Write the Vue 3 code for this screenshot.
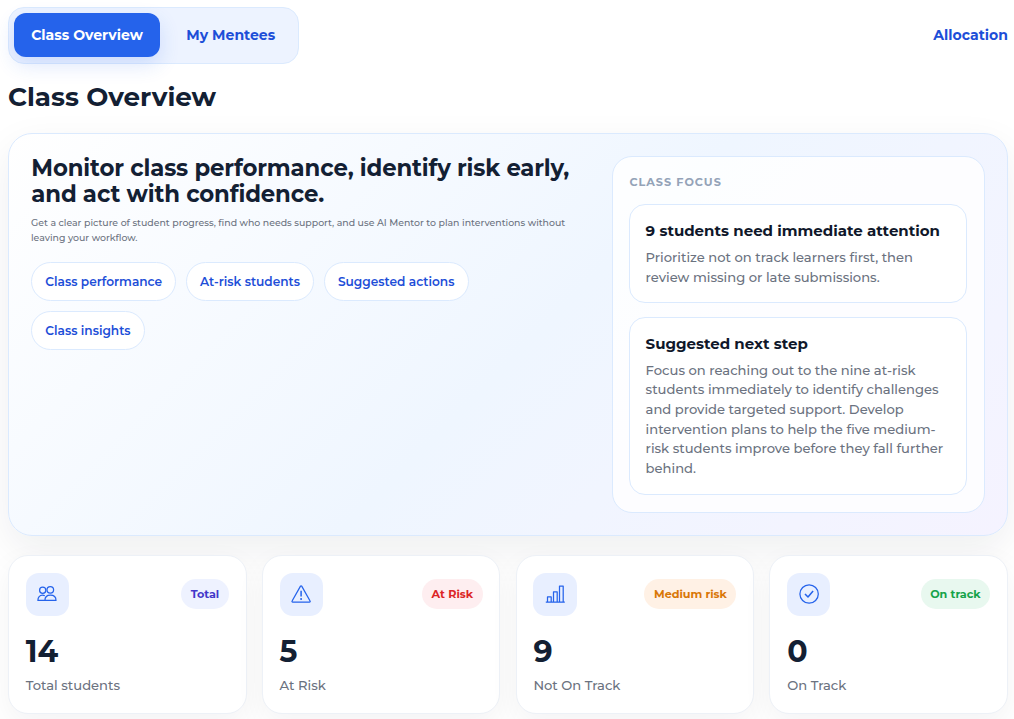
<script setup>
const chips = ['Class performance', 'At-risk students', 'Suggested actions', 'Class insights']

const stats = [
  { icon: 'people', badge: 'Total', tone: 'total', value: 14, label: 'Total students' },
  { icon: 'warning', badge: 'At Risk', tone: 'risk', value: 5, label: 'At Risk' },
  { icon: 'chart', badge: 'Medium risk', tone: 'medium', value: 9, label: 'Not On Track' },
  { icon: 'check', badge: 'On track', tone: 'ok', value: 0, label: 'On Track' },
]
</script>

<template>
  <main class="page">
    <header class="topbar">
      <nav class="tabs">
        <button class="tab active">Class Overview</button>
        <button class="tab">My Mentees</button>
      </nav>
      <a class="allocation">Allocation</a>
    </header>

    <h1 class="page-title">Class Overview</h1>

    <section class="hero">
      <div class="hero-copy">
        <h2>Monitor class performance, identify risk early,<br />and act with confidence.</h2>
        <p>
          Get a clear picture of student progress, find who needs support, and use AI Mentor to plan interventions without<br />
          leaving your workflow.
        </p>
        <div class="chips">
          <span v-for="chip in chips" :key="chip" class="chip">{{ chip }}</span>
        </div>
      </div>

      <aside class="focus">
        <div class="focus-label">CLASS FOCUS</div>
        <article class="focus-card attention">
          <h3>9 students need immediate attention</h3>
          <p>Prioritize not on track learners first, then review missing or late submissions.</p>
        </article>
        <article class="focus-card next-step">
          <h3>Suggested next step</h3>
          <p>
            Focus on reaching out to the nine at-risk students immediately to identify challenges
            and provide targeted support. Develop intervention plans to help the five medium-risk
            students improve before they fall further behind.
          </p>
        </article>
      </aside>
    </section>

    <section class="stats">
      <article v-for="stat in stats" :key="stat.label" class="stat-card">
        <div class="stat-top">
          <span class="stat-icon">
            <svg v-if="stat.icon === 'people'" viewBox="0 0 20 20">
              <circle cx="5.7" cy="5.2" r="3.1" />
              <circle cx="13.3" cy="4.8" r="3.3" />
              <path d="M7.9 15.4H.9c0-3.2 1.8-5.2 4.6-5.2.9 0 1.6.2 2.3.6M7.9 15.4c0-3.3 2.1-5.2 5.5-5.2s5.6 1.9 5.6 5.2z" />
            </svg>
            <svg v-else-if="stat.icon === 'warning'" viewBox="0 0 20 20">
              <path d="M9.5 1.1a.7.7 0 0 1 1.2 0l8.4 14.9c.3.5 0 1-.6 1H1.7c-.6 0-.9-.5-.6-1z" />
              <path class="mark" d="M10.1 5.8v5.8M10.1 13.1v1.8" />
            </svg>
            <svg v-else-if="stat.icon === 'chart'" viewBox="0 0 20 20">
              <path d="M.8 17.1h19M2.5 17.1v-5.2h3.7v5.2M8.5 17.1V6.8h3.7v10.3M14.5 17.1V1.1h3.7v16" />
            </svg>
            <svg v-else viewBox="0 0 20 20">
              <circle cx="10.1" cy="9" r="9.2" />
              <path class="tick" d="M6 8.9l3 3.1 5.1-6.1" />
            </svg>
          </span>
          <span class="badge" :class="stat.tone">{{ stat.badge }}</span>
        </div>
        <div class="stat-value">{{ stat.value }}</div>
        <div class="stat-label">{{ stat.label }}</div>
      </article>
    </section>
  </main>
</template>

<style>
body {
  background: #fff;
}
</style>

<style scoped>
* {
  box-sizing: border-box;
}

.page {
  width: 1014px;
  height: 719px;
  padding: 7px 6px 5px 8px;
  font-family: Montserrat, Inter, 'Liberation Sans', sans-serif;
  color: #132033;
  overflow: hidden;
}

h1,
h2,
h3,
p {
  margin: 0;
}

.topbar {
  display: flex;
  align-items: center;
  justify-content: space-between;
  height: 57px;
}

.tabs {
  display: flex;
  gap: 10px;
  width: 291px;
  height: 57px;
  padding: 5px 5px 6px;
  border: 1px solid #dbeafe;
  border-radius: 16px;
  background: #edf3ff;
}

.tab {
  width: 146px;
  height: 44px;
  padding: 0;
  border: 0;
  border-radius: 12px;
  background: transparent;
  color: #1d4ed8;
  font-family: inherit;
  font-size: 14.05px;
  font-weight: 700;
}

.tab:last-child {
  width: 121.5px;
}

.tab.active {
  background: #2563eb;
  color: #fff;
  box-shadow: 0 8px 20px rgba(37, 99, 235, 0.16);
}

.allocation {
  margin-top: -2px;
  color: #1d4ed8;
  font-size: 14.05px;
  font-weight: 700;
}

.page-title {
  height: 69px;
  padding-top: 17px;
  font-size: 26.2px;
  line-height: 32px;
  font-weight: 700;
}

.hero {
  display: flex;
  justify-content: space-between;
  height: 403px;
  padding: 22px;
  border: 1px solid #dbeafe;
  border-radius: 24px;
  background: linear-gradient(135deg, #fff 0%, #eff6ff 52%, #f5f3ff 100%);
  box-shadow: 0 14px 40px rgba(15, 23, 42, 0.07);
}

.hero-copy {
  width: 545px;
}

.hero h2 {
  margin-top: -1px;
  padding-left: 0.3px;
  font-size: 22.8px;
  line-height: 26px;
  font-weight: 700;
  letter-spacing: -0.14px;
  white-space: nowrap;
}

.hero-copy p {
  margin-top: 8px;
  color: #6b7280;
  font-size: 9.38px;
  line-height: 15px;
  font-weight: 500;
  white-space: nowrap;
}

.chips {
  display: flex;
  flex-wrap: wrap;
  gap: 9.6px 9.3px;
  width: 460px;
  margin-top: 17.4px;
}

.chip {
  height: 38.8px;
  padding: 0 13.3px;
  border: 1px solid #dbeafe;
  border-radius: 20px;
  background: #fff;
  color: #1d4ed8;
  font-size: 12.16px;
  line-height: 37.2px;
  font-weight: 600;
  white-space: nowrap;
}

.focus {
  width: 373px;
  height: 357px;
  padding: 17px 17px 0 16px;
  border: 1px solid #dbeafe;
  border-radius: 20px;
  background: rgba(255, 255, 255, 0.82);
}

.focus-label {
  height: 30px;
  padding-left: 0.4px;
  color: #94a3b8;
  font-size: 11.2px;
  line-height: 17px;
  font-weight: 700;
  letter-spacing: 1px;
}

.focus-card {
  padding: 15.7px 15.6px 0;
  border: 1px solid #dbeafe;
  border-radius: 16px;
  background: #fff;
}

.attention {
  height: 99px;
}

.next-step {
  height: 178px;
  margin-top: 14px;
}

.focus-card h3 {
  color: #0f172a;
  font-size: 15.02px;
  line-height: 20px;
  font-weight: 700;
}

.focus-card p {
  margin-top: 7px;
  color: #6b7280;
  font-size: 13.12px;
  line-height: 19.68px;
  font-weight: 500;
}

.focus-card.attention p {
  margin-top: 7.3px;
}

.stats {
  display: grid;
  grid-template-columns: repeat(4, 1fr);
  gap: 15.2px;
  margin-top: 19px;
}

.stat-card {
  height: 159px;
  padding: 17px 16.8px;
  border: 1px solid #edf1f7;
  border-radius: 20px;
  background: #fff;
  box-shadow: 0 10px 30px rgba(15, 23, 42, 0.05);
}

.stat-top {
  display: flex;
  align-items: center;
  justify-content: space-between;
}

.stat-icon {
  display: flex;
  align-items: center;
  justify-content: center;
  width: 43.2px;
  height: 43px;
  border-radius: 13px;
  background: #e8efff;
}

.stat-icon svg {
  width: 20px;
  height: 20px;
  fill: none;
  stroke: #2563eb;
  stroke-width: 1.25;
  stroke-linejoin: round;
  overflow: visible;
}

.stat-icon .mark,
.stat-icon .tick {
  stroke-width: 1.5;
}

.badge {
  height: 30px;
  margin-top: -2px;
  padding: 0 9.6px;
  border-radius: 15px;
  font-size: 11.2px;
  line-height: 30px;
  font-weight: 700;
}

.total {
  background: #eef2ff;
  color: #4338ca;
}

.risk {
  background: #feeef0;
  color: #dc2626;
}

.medium {
  background: #fff1e5;
  color: #d97706;
}

.ok {
  background: #e8f8ef;
  color: #16a34a;
}

.stat-value {
  margin-top: 19.6px;
  font-size: 30px;
  line-height: 32px;
  font-weight: 700;
}

.stat-label {
  margin-top: 7.4px;
  color: #6b7280;
  font-size: 13.12px;
  line-height: 20px;
  font-weight: 500;
}
</style>
